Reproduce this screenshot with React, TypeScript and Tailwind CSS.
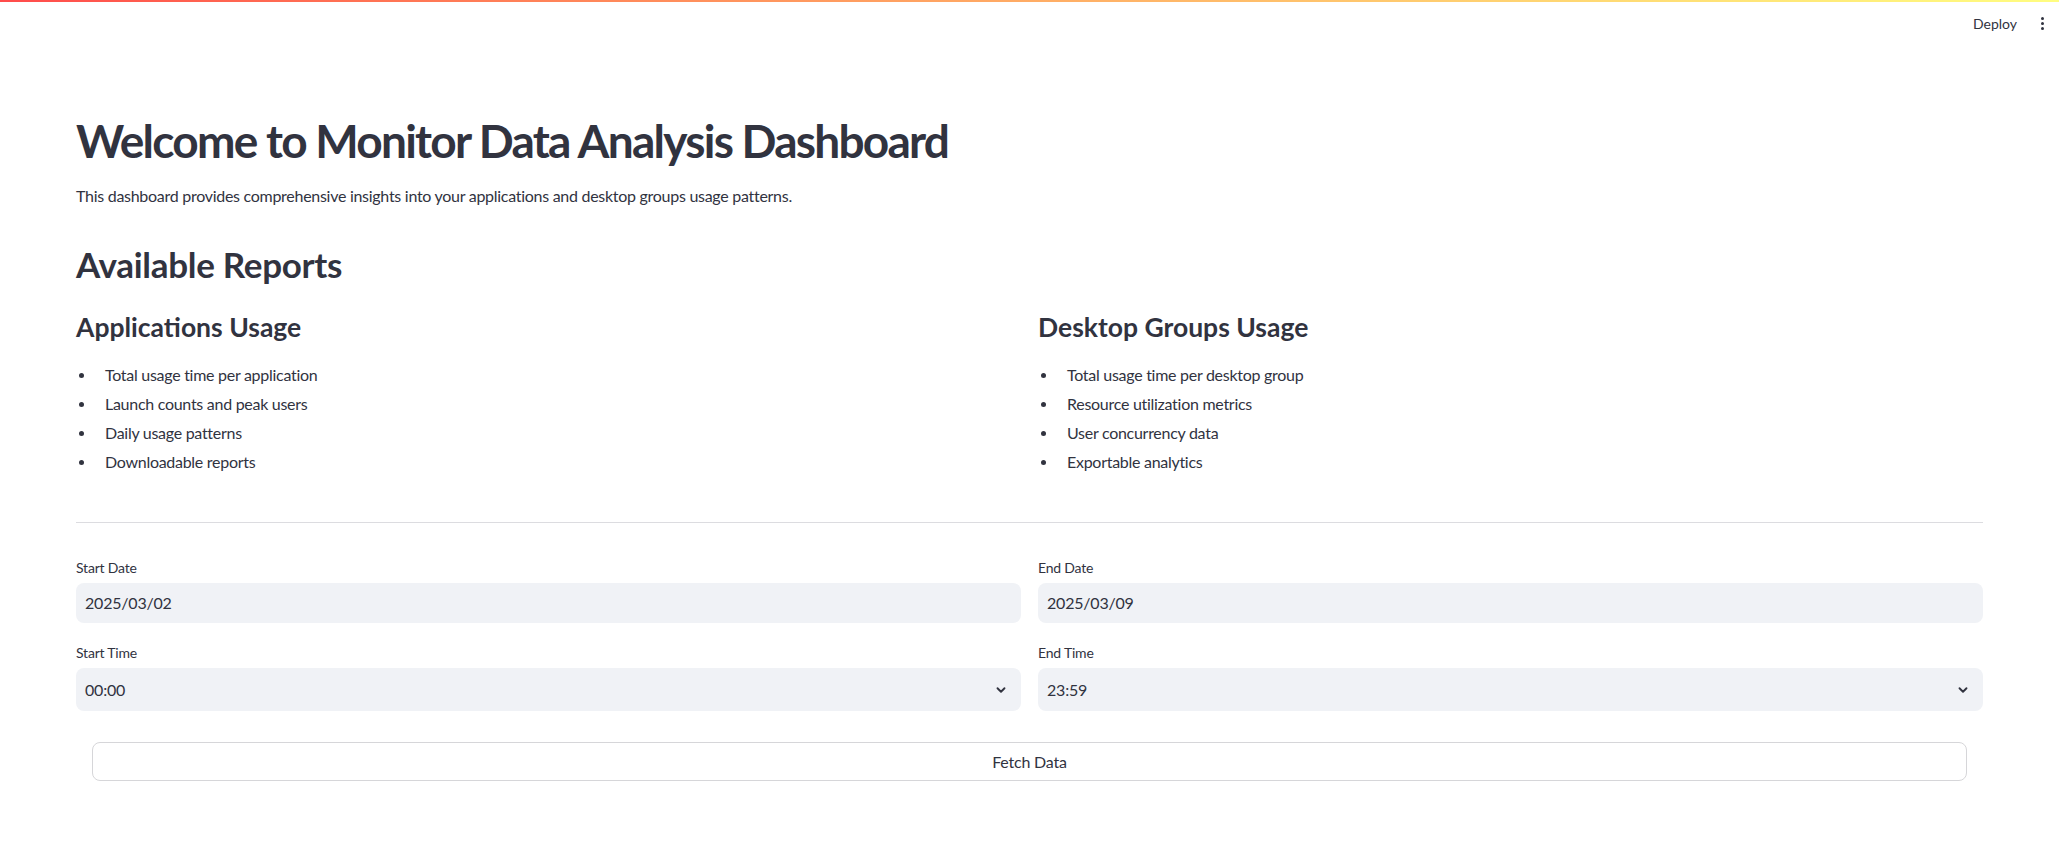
import React from 'react';

const appsItems = [
  'Total usage time per application',
  'Launch counts and peak users',
  'Daily usage patterns',
  'Downloadable reports',
];

const desktopItems = [
  'Total usage time per desktop group',
  'Resource utilization metrics',
  'User concurrency data',
  'Exportable analytics',
];

const Chevron = () => (
  <svg width="14" height="14" viewBox="0 0 24 24" fill="none" stroke="#31333f" strokeWidth="3.2" strokeLinecap="round" strokeLinejoin="round">
    <path d="M6 9l6 6 6-6" />
  </svg>
);

const ReportColumn: React.FC<{ title: string; items: string[] }> = ({ title, items }) => (
  <div className="flex flex-col">
    <h3 className="text-[26.5px] leading-[34px] font-bold text-[#31333f]">{title}</h3>
    <ul className="mt-[19px] flex flex-col gap-[5px]">
      {items.map((item) => (
        <li key={item} className="flex items-center text-[16px] leading-[24px] tracking-[-0.28px] text-[#31333f]">
          <span className="w-[29px] pl-[3px]">
            <span className="block w-[5px] h-[5px] rounded-full bg-[#31333f]"></span>
          </span>
          {item}
        </li>
      ))}
    </ul>
  </div>
);

const Field: React.FC<{ label: string; value: string; select?: boolean; tall?: boolean }> = ({ label, value, select, tall }) => (
  <div className="flex flex-col">
    <label className="text-[14px] leading-[20px] tracking-[-0.2px] text-[#31333f] mt-[2px] mb-[5px]">{label}</label>
    <div className={`flex items-center justify-between rounded-lg bg-[#f0f2f6] pl-[9px] pr-[13px] text-[16px] tracking-[-0.2px] text-[#31333f] ${tall ? 'h-[43px]' : 'h-[40px]'}`}>
      <span>{value}</span>
      {select && <Chevron />}
    </div>
  </div>
);

export default function App() {
  return (
    <div className="min-h-screen bg-white text-[#31333f]" style={{ fontFamily: 'Lato, "Noto Sans", sans-serif' }}>
      <div className="h-[2px] bg-gradient-to-r from-[#ff4b4b] to-[#fffd80]"></div>
      <header className="h-[42px] flex items-center justify-end pr-[12px]">
        <span className="text-[14px] text-[#31333f] mr-[20px]">Deploy</span>
        <span className="flex flex-col gap-[2px] items-center w-[10px]">
          <span className="w-[3px] h-[3px] rounded-full bg-[#31333f]"></span>
          <span className="w-[3px] h-[3px] rounded-full bg-[#31333f]"></span>
          <span className="w-[3px] h-[3px] rounded-full bg-[#31333f]"></span>
        </span>
      </header>
      <main className="px-[76px] pt-[67px]">
        <h1 className="text-[46px] leading-[60px] font-bold tracking-[-1.75px] text-[#31333f]">Welcome to Monitor Data Analysis Dashboard</h1>
        <p className="mt-[13px] text-[16px] leading-[24px] tracking-[-0.28px]">
          This dashboard provides comprehensive insights into your applications and desktop groups usage patterns.
        </p>
        <h2 className="mt-[35px] text-[35px] leading-[42px] font-bold tracking-[-0.3px]">Available Reports</h2>
        <div className="mt-[25px] grid grid-cols-2 gap-[17px]">
          <ReportColumn title="Applications Usage" items={appsItems} />
          <ReportColumn title="Desktop Groups Usage" items={desktopItems} />
        </div>
        <hr className="mt-[48px] border-0 h-px bg-[#dcdce0]" />
        <div className="mt-[33px] grid grid-cols-2 gap-x-[17px] gap-y-[18px]">
          <Field label="Start Date" value="2025/03/02" />
          <Field label="End Date" value="2025/03/09" />
          <Field label="Start Time" value="00:00" select tall />
          <Field label="End Time" value="23:59" select tall />
        </div>
        <div className="mt-[31px] px-[16px]">
          <button className="w-full h-[39px] rounded-lg border border-[#d6d6d9] bg-white text-[16px] tracking-[-0.2px] text-[#31333f]">
            Fetch Data
          </button>
        </div>
      </main>
    </div>
  );
}
